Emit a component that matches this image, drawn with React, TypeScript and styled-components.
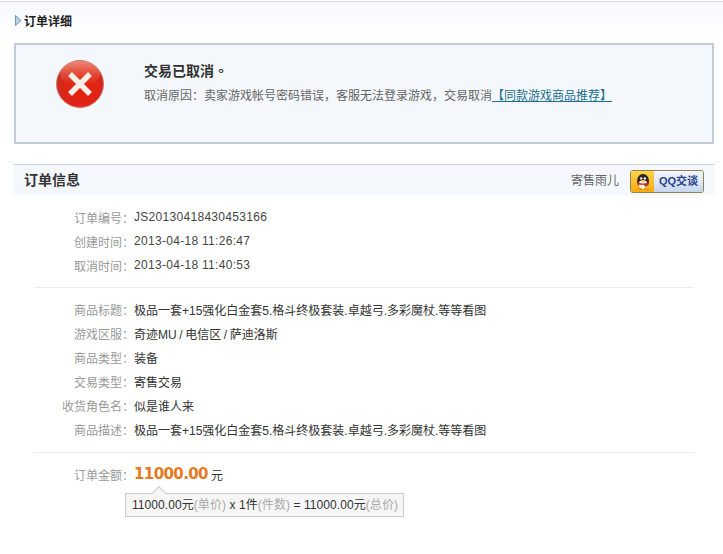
import React from 'react';
import styled, { createGlobalStyle } from 'styled-components';

const GlobalStyle = createGlobalStyle`
  html, body {
    margin: 0;
    padding: 0;
    background: #fff;
  }
  body {
    font-family: "Liberation Sans", "Noto Sans CJK SC", sans-serif;
    font-size: 12px;
    color: #333;
  }
`;

const infoRows = [
  { label: '订单编号：', value: 'JS20130418430453166' },
  { label: '创建时间：', value: '2013-04-18 11:26:47' },
  { label: '取消时间：', value: '2013-04-18 11:40:53' },
];

const goodsRows = [
  { label: '商品标题：', value: '极品一套+15强化白金套5.格斗终极套装.卓越弓.多彩魔杖.等等看图' },
  { label: '游戏区服：', value: '奇迹MU / 电信区 / 萨迪洛斯' },
  { label: '商品类型：', value: '装备' },
  { label: '交易类型：', value: '寄售交易' },
  { label: '收货角色名：', value: '似是谁人来' },
  { label: '商品描述：', value: '极品一套+15强化白金套5.格斗终极套装.卓越弓.多彩魔杖.等等看图' },
];

const ErrorIcon = () => (
  <svg width="50" height="50" viewBox="0 0 50 50">
    <defs>
      <radialGradient id="errFill" cx="55%" cy="62%" r="62%">
        <stop offset="0%" stopColor="#e8200c" />
        <stop offset="70%" stopColor="#d9261a" />
        <stop offset="100%" stopColor="#c0352a" />
      </radialGradient>
      <linearGradient id="errShine" x1="0" y1="0" x2="0" y2="1">
        <stop offset="0%" stopColor="#f59a85" stopOpacity="0.85" />
        <stop offset="100%" stopColor="#ee5a3c" stopOpacity="0" />
      </linearGradient>
    </defs>
    <circle cx="25" cy="25" r="23.5" fill="url(#errFill)" stroke="#d2766c" strokeWidth="1" />
    <ellipse cx="25" cy="15" rx="20" ry="13" fill="url(#errShine)" />
    <path d="M15 15 L35 35 M35 15 L15 35" stroke="#f8efe9" strokeWidth="5.5" strokeLinecap="butt" />
  </svg>
);

const PenguinIcon = () => (
  <svg width="18" height="18" viewBox="0 0 18 18">
    <ellipse cx="9" cy="8" rx="6" ry="7" fill="#2b2420" />
    <ellipse cx="9" cy="11.5" rx="4.4" ry="4.6" fill="#fbf3e6" />
    <circle cx="7.2" cy="5.4" r="1.2" fill="#fff" />
    <circle cx="10.8" cy="5.4" r="1.2" fill="#fff" />
    <path d="M6.6 7.4 L11.4 7.4 L9 9 Z" fill="#f2a010" />
    <path d="M3.4 9 Q9 12 14.6 9 L14.6 11.4 Q12.4 12 11.8 14.4 L10 11.8 Q7 12 3.4 11.4 Z" fill="#c8281a" />
    <ellipse cx="5.8" cy="16" rx="2.6" ry="1.2" fill="#ec9a10" />
    <ellipse cx="12.2" cy="16" rx="2.6" ry="1.2" fill="#ec9a10" />
  </svg>
);

const ArrowIcon = () => (
  <svg width="7" height="11" viewBox="0 0 7 11">
    <path d="M0.5 0.5 L6 5.5 L0.5 10.5 Z" fill="#b9d2e8" stroke="#6f93b4" strokeWidth="1" />
  </svg>
);

const App = () => {
  return (
    <Page>
      <GlobalStyle />
      <PageHead>
        <ArrowIcon />
        <PageTitle>订单详细</PageTitle>
      </PageHead>

      <Notice>
        <NoticeIcon>
          <ErrorIcon />
        </NoticeIcon>
        <NoticeBody>
          <NoticeTitle>
            交易已取消<NoticeStop>。</NoticeStop>
          </NoticeTitle>
          <NoticeText>
            取消原因：卖家游戏帐号密码错误，客服无法登录游戏，交易取消
            <NoticeLink href="#">【同款游戏商品推荐】</NoticeLink>
          </NoticeText>
        </NoticeBody>
      </Notice>

      <SectionHead>
        <SectionTitle>订单信息</SectionTitle>
        <Seller>寄售雨儿</Seller>
        <QQButton>
          <QQIconPart>
            <PenguinIcon />
          </QQIconPart>
          <QQLabel>QQ交谈</QQLabel>
        </QQButton>
      </SectionHead>

      <Group>
        {infoRows.map((row) => (
          <Row key={row.label}>
            <Label>{row.label}</Label>
            <CodeValue>{row.value}</CodeValue>
          </Row>
        ))}
      </Group>

      <Divider />

      <GoodsGroup>
        {goodsRows.map((row) => (
          <Row key={row.label}>
            <Label>{row.label}</Label>
            <Value>{row.value}</Value>
          </Row>
        ))}
      </GoodsGroup>

      <AmountDivider />

      <AmountRow>
        <Label>订单金额：</Label>
        <Amount>11000.00</Amount>
        <Unit>元</Unit>
      </AmountRow>

      <PriceTip>
        11000.00元<Muted>(单价)</Muted> x 1件<Muted>(件数)</Muted> = 11000.00元<Muted>(总价)</Muted>
      </PriceTip>
    </Page>
  );
};

export default App;

const Page = styled.div`
  width: 723px;
  height: 554px;
  overflow: hidden;
  background: #fff;
  border-top: 1px solid #fff;
  box-sizing: border-box;
`;

const PageHead = styled.div`
  height: 42px;
  box-sizing: border-box;
  display: flex;
  align-items: center;
  gap: 2px;
  padding: 0 0 4px 15px;
  border-top: 1px solid #d5dce8;
  background: linear-gradient(#f6f8fc, #fff 32px);
`;

const PageTitle = styled.h1`
  margin: 0;
  font-size: 12px;
  font-weight: bold;
  color: #222;
`;

const Notice = styled.div`
  width: 700px;
  height: 101px;
  margin-left: 14px;
  box-sizing: border-box;
  display: flex;
  border: 2px solid #c0ccdc;
  background: #f4f8fc;
`;

const NoticeIcon = styled.div`
  width: 128px;
  padding: 14px 0 0 39px;
  box-sizing: border-box;
  flex: none;
`;

const NoticeBody = styled.div`
  padding-top: 15px;
`;

const NoticeTitle = styled.div`
  font-size: 14px;
  line-height: 20px;
  font-weight: bold;
  color: #333;
`;

const NoticeStop = styled.span`
  font-family: "Noto Sans CJK TC", sans-serif;
`;

const NoticeText = styled.div`
  margin-top: 6px;
  line-height: 18px;
  color: #666;
`;

const NoticeLink = styled.a`
  color: #1c6f8e;
  text-decoration: underline;
`;

const SectionHead = styled.div`
  width: 700px;
  height: 31px;
  margin: 20px 0 0 14px;
  box-sizing: border-box;
  display: flex;
  align-items: center;
  padding: 0 10px 2px;
  border-top: 1px solid #c8d4e0;
  background: #f4f8fc;
`;

const SectionTitle = styled.h2`
  margin: 0;
  flex: 1;
  font-size: 14px;
  font-weight: bold;
  color: #333;
`;

const Seller = styled.span`
  margin-right: 11px;
  color: #666;
`;

const QQButton = styled.div`
  width: 74px;
  height: 23px;
  margin-top: 5px;
  box-sizing: border-box;
  display: flex;
  overflow: hidden;
  border: 1px solid #8f8450;
  border-radius: 3px;
`;

const QQIconPart = styled.div`
  width: 23px;
  flex: none;
  display: flex;
  align-items: center;
  justify-content: center;
  background: linear-gradient(#fcd34a, #f6ab12);
`;

const QQLabel = styled.div`
  flex: 1;
  text-align: center;
  line-height: 21px;
  font-size: 11px;
  font-weight: bold;
  color: #27428a;
  background: linear-gradient(#f3f7fd, #c6d6ee);
`;

const Group = styled.div`
  padding-top: 10px;
`;

const GoodsGroup = styled.div`
  padding-top: 9px;
`;

const Row = styled.div`
  height: 24px;
  display: flex;
  align-items: center;
`;

const Label = styled.span`
  width: 134px;
  flex: none;
  text-align: right;
  color: #999;
`;

const Value = styled.span`
  color: #333;
  word-spacing: -0.75px;
`;

const CodeValue = styled.span`
  color: #444;
  letter-spacing: 0.3px;
`;

const Divider = styled.div`
  height: 1px;
  margin: 10px 29px 0 34px;
  background: #ececec;
`;

const AmountDivider = styled.div`
  height: 1px;
  margin: 11px 28px 0 33px;
  background: #ececec;
`;

const AmountRow = styled.div`
  height: 24px;
  margin-top: 9px;
  display: flex;
  align-items: center;
`;

const Amount = styled.strong`
  font-family: "DejaVu Sans", sans-serif;
  font-size: 15px;
  letter-spacing: -0.6px;
  color: #e67a22;
`;

const Unit = styled.span`
  margin-left: 3px;
  color: #333;
`;

const PriceTip = styled.div`
  position: relative;
  width: 279px;
  height: 24px;
  margin: 7px 0 0 125px;
  box-sizing: border-box;
  padding-left: 6px;
  line-height: 22px;
  letter-spacing: 0.07px;
  white-space: nowrap;
  border: 1px solid #ccc;
  background: #f6f6f6;
  color: #333;

  &::before {
    content: '';
    position: absolute;
    top: -6px;
    left: 28px;
    width: 9px;
    height: 9px;
    transform: rotate(45deg);
    border-left: 1px solid #ccc;
    border-top: 1px solid #ccc;
    background: #f6f6f6;
  }
`;

const Muted = styled.span`
  color: #aaa;
`;
